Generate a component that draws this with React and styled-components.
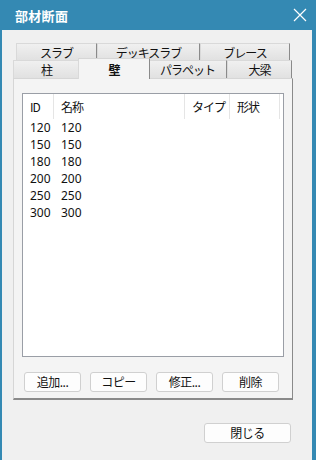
import React from "react";
import styled, { createGlobalStyle } from "styled-components";

const Global = createGlobalStyle`
  html, body { margin: 0; padding: 0; background: #3489b3; }
  body { font-family: "Noto Sans", "Noto Sans CJK JP", sans-serif; }
`;

const Window = styled.div`
  width: 316px;
  height: 460px;
  box-sizing: border-box;
  background: #3489b3;
  padding: 0 4px 0 2px;
  display: flex;
  flex-direction: column;
  overflow: hidden;
`;

const TitleBar = styled.div`
  height: 30px;
  flex: none;
  display: flex;
  align-items: center;
  justify-content: space-between;
  padding: 0 5px 0 13px;
`;

const Title = styled.div`
  color: #fff;
  font-family: "Noto Sans CJK JP", sans-serif;
  font-weight: 700;
  font-size: 13px;
  letter-spacing: 0.3px;
`;

const Client = styled.div`
  flex: 1;
  background: #f0f0f0;
  padding: 13px 0 0 11px;
  display: flex;
  flex-direction: column;
  font-family: "Noto Sans CJK JP", sans-serif;
  font-size: 12px;
  color: #111;
`;

const TabControl = styled.div`
  width: 280px;
  display: flex;
  flex-direction: column;
`;

const TabRow = styled.div`
  display: flex;
  height: ${(p) => p.$h}px;
  padding-left: ${(p) => p.$indent}px;
  align-items: flex-end;
`;

const Tab = styled.div`
  box-sizing: border-box;
  width: ${(p) => p.$w}px;
  height: ${(p) => (p.$active ? p.$h + 3 : p.$h)}px;
  margin: ${(p) => (p.$active ? "0 -2px -1px -2px" : "0")};
  position: relative;
  z-index: ${(p) => (p.$active ? 2 : 1)};
  display: flex;
  align-items: center;
  justify-content: center;
  line-height: 1;
  letter-spacing: -1px;
  background: ${(p) =>
    p.$active ? "#f4f4f4" : "linear-gradient(#f0f0f0, #e1e1e1)"};
  border-top: 1px solid ${(p) => (p.$active ? "#d6d6d6" : "#d9d9d9")};
  border-left: 1px solid #d9d9d9;
  border-right: 1px solid #8a8a8a;
  font-weight: ${(p) => (p.$active ? 700 : 400)};
  padding-top: 1px;
`;

const Panel = styled.div`
  box-sizing: border-box;
  height: 322px;
  background: #f4f4f4;
  border-top: 1px solid #d6d6d6;
  border-left: 1px solid #d6d6d6;
  border-right: 1px solid #8a8a8a;
  border-bottom: 2px solid #8a8a8a;
  padding: 14px 8px 0 8px;
  display: flex;
  flex-direction: column;
`;

const List = styled.div`
  box-sizing: border-box;
  width: 262px;
  height: 264px;
  background: #fff;
  border: 1px solid #9a9ea6;
  display: flex;
  flex-direction: column;
`;

const Row = styled.div`
  display: grid;
  grid-template-columns: 31px 131px 45px 50px;
  height: ${(p) => (p.$header ? 25 : 17)}px;
  align-items: center;
  font-family: ${(p) =>
    p.$header
      ? '"Noto Sans CJK JP", sans-serif'
      : '"Noto Sans", "Noto Sans CJK JP", sans-serif'};
  font-size: 12px;
  line-height: 1;
`;

const Cell = styled.div`
  height: 100%;
  display: flex;
  align-items: center;
  box-sizing: border-box;
  padding-left: 7px;
  letter-spacing: ${(p) => (p.$header ? "-1px" : "0")};
  border-right: ${(p) => (p.$header ? "1px solid #e5e5e5" : "none")};
  white-space: nowrap;
`;

const Buttons = styled.div`
  display: flex;
  gap: 9px;
  margin: 15px 0 0 2px;
`;

const Button = styled.div`
  box-sizing: border-box;
  width: ${(p) => p.$w}px;
  height: 20px;
  background: #fdfdfd;
  border: 1px solid #d0d0d0;
  border-radius: 3px;
  display: flex;
  align-items: center;
  justify-content: center;
  font-size: 12px;
  letter-spacing: -0.5px;
  line-height: 1;
`;

const Footer = styled.div`
  display: flex;
  justify-content: flex-end;
  width: 278px;
  margin-top: 23px;
`;

const CloseIcon = () => (
  <svg width="14" height="14" viewBox="0 0 14 14">
    <path d="M1 1 L13 13 M13 1 L1 13" stroke="#fff" strokeWidth="1.2" fill="none" />
  </svg>
);

const rows = ["120", "150", "180", "200", "250", "300"];

export default function App() {
  return (
    <>
      <Global />
      <Window>
        <TitleBar>
          <Title>部材断面</Title>
          <CloseIcon />
        </TitleBar>
        <Client>
          <TabControl>
            <TabRow $h={17} $indent={3}>
              <Tab $w={81} $h={17}>スラブ</Tab>
              <Tab $w={103} $h={17}>デッキスラブ</Tab>
              <Tab $w={90} $h={17}>ブレース</Tab>
            </TabRow>
            <TabRow $h={18} $indent={0}>
              <Tab $w={67} $h={18}>柱</Tab>
              <Tab $w={72} $h={18} $active>壁</Tab>
              <Tab $w={79} $h={18}>パラペット</Tab>
              <Tab $w={65} $h={18}>大梁</Tab>
            </TabRow>
            <Panel>
              <List>
                <Row $header>
                  <Cell $header>ID</Cell>
                  <Cell $header>名称</Cell>
                  <Cell $header>タイプ</Cell>
                  <Cell $header>形状</Cell>
                </Row>
                {rows.map((r) => (
                  <Row key={r}>
                    <Cell>{r}</Cell>
                    <Cell>{r}</Cell>
                    <Cell />
                    <Cell />
                  </Row>
                ))}
              </List>
              <Buttons>
                <Button $w={57}>追加...</Button>
                <Button $w={57}>コピー</Button>
                <Button $w={57}>修正...</Button>
                <Button $w={57}>削除</Button>
              </Buttons>
            </Panel>
          </TabControl>
          <Footer>
            <Button $w={87}>閉じる</Button>
          </Footer>
        </Client>
      </Window>
    </>
  );
}
